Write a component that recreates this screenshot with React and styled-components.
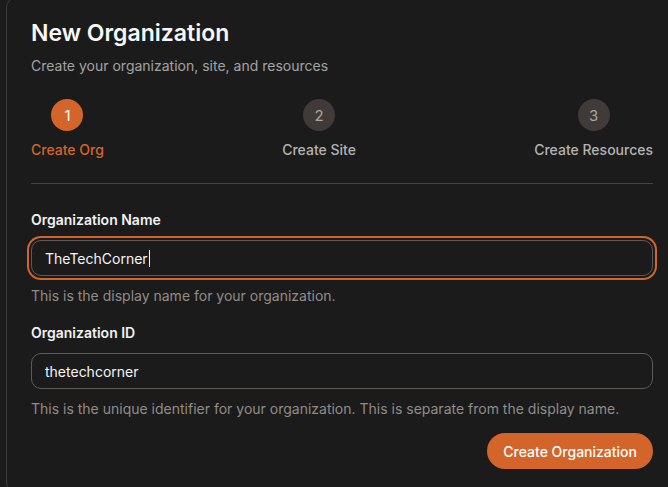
import React from 'react';
import styled, { createGlobalStyle } from 'styled-components';

const GlobalStyle = createGlobalStyle`
  html, body {
    margin: 0;
    padding: 0;
    background: #1b1b1b;
    overflow: hidden;
    font-family: Inter, "Noto Sans", "Liberation Sans", sans-serif;
  }
`;

const orange = '#d4652a';

const steps = [
  { n: 1, label: 'Create Org', active: true },
  { n: 2, label: 'Create Site' },
  { n: 3, label: 'Create Resources' },
];

function App() {
  return (
    <>
      <GlobalStyle />
      <Page>
        <Card>
          <Title>New Organization</Title>
          <Subtitle>Create your organization, site, and resources</Subtitle>

          <Steps>
            {steps.map((s) => (
              <Step key={s.n}>
                <Circle $active={s.active}>{s.n}</Circle>
                <StepLabel $active={s.active}>{s.label}</StepLabel>
              </Step>
            ))}
          </Steps>

          <Divider />

          <Label $gap={26}>Organization Name</Label>
          <Field $focused>
            TheTechCorner<Caret />
          </Field>
          <Help>This is the display name for your organization.</Help>

          <Label $gap={17}>Organization ID</Label>
          <Field>thetechcorner</Field>
          <Help>This is the unique identifier for your organization. This is separate from the display name.</Help>

          <Actions>
            <Button>Create Organization</Button>
          </Actions>
        </Card>
      </Page>
    </>
  );
}
export default App;

const Page = styled.div`
  padding-left: 6px;
  width: 668px;
  height: 487px;
  box-sizing: border-box;
  overflow: hidden;
`;

const Card = styled.div`
  margin-top: -4px;
  width: 672px;
  box-sizing: border-box;
  border: 1px solid #3d3d3d;
  border-radius: 12px;
  background: #1b1b1b;
  padding: 20px 24px 24px;
  display: flex;
  flex-direction: column;
`;

const Title = styled.h1`
  margin: 0;
  font-size: 23px;
  line-height: 32px;
  font-weight: 600;
  color: #f7f7f7;
`;

const Subtitle = styled.p`
  margin: 7px 0 0;
  font-size: 14px;
  line-height: 20px;
  color: #a3a3a3;
`;

const Steps = styled.div`
  margin-top: 23px;
  width: 622px;
  display: flex;
  justify-content: space-between;
`;

const Step = styled.div`
  display: flex;
  flex-direction: column;
  align-items: center;
  gap: 9px;
`;

const Circle = styled.div`
  width: 32px;
  height: 32px;
  border-radius: 50%;
  background: ${(p) => (p.$active ? orange : '#403b38')};
  color: ${(p) => (p.$active ? '#fff' : '#aaa6a3')};
  font-size: 15px;
  display: flex;
  align-items: center;
  justify-content: center;
`;

const StepLabel = styled.span`
  font-size: 14px;
  line-height: 20px;
  font-weight: 500;
  color: ${(p) => (p.$active ? orange : '#b3b3b3')};
`;

const Divider = styled.hr`
  margin: 23px 0 0;
  width: 622px;
  border: none;
  border-top: 1px solid #454545;
`;

const Label = styled.label`
  margin-top: ${(p) => p.$gap}px;
  font-size: 14px;
  line-height: 20px;
  font-weight: 600;
  color: #f2f2f2;
`;

const Field = styled.div`
  margin-top: 10px;
  width: 622px;
  height: 36px;
  box-sizing: border-box;
  border: 1px solid #5f5a56;
  border-radius: 10px;
  padding: 0 13px;
  display: flex;
  align-items: center;
  font-size: 14px;
  color: #f5f5f5;
  background: #1b1b1b;
  box-shadow: ${(p) => (p.$focused ? `0 0 0 2px #1b1b1b, 0 0 0 4px ${orange}` : 'none')};
`;

const Caret = styled.span`
  display: inline-block;
  width: 1px;
  height: 17px;
  margin-left: 1px;
  background: #f5f5f5;
`;

const Help = styled.p`
  margin: 10px 0 0;
  font-size: 14px;
  line-height: 20px;
  color: #918c88;
`;

const Actions = styled.div`
  margin-top: 14px;
  width: 622px;
  display: flex;
  justify-content: flex-end;
`;

const Button = styled.button`
  height: 36px;
  padding: 0 16px;
  border: none;
  border-radius: 18px;
  background: ${orange};
  color: #fff;
  font-family: inherit;
  font-size: 14px;
  font-weight: 500;
`;
